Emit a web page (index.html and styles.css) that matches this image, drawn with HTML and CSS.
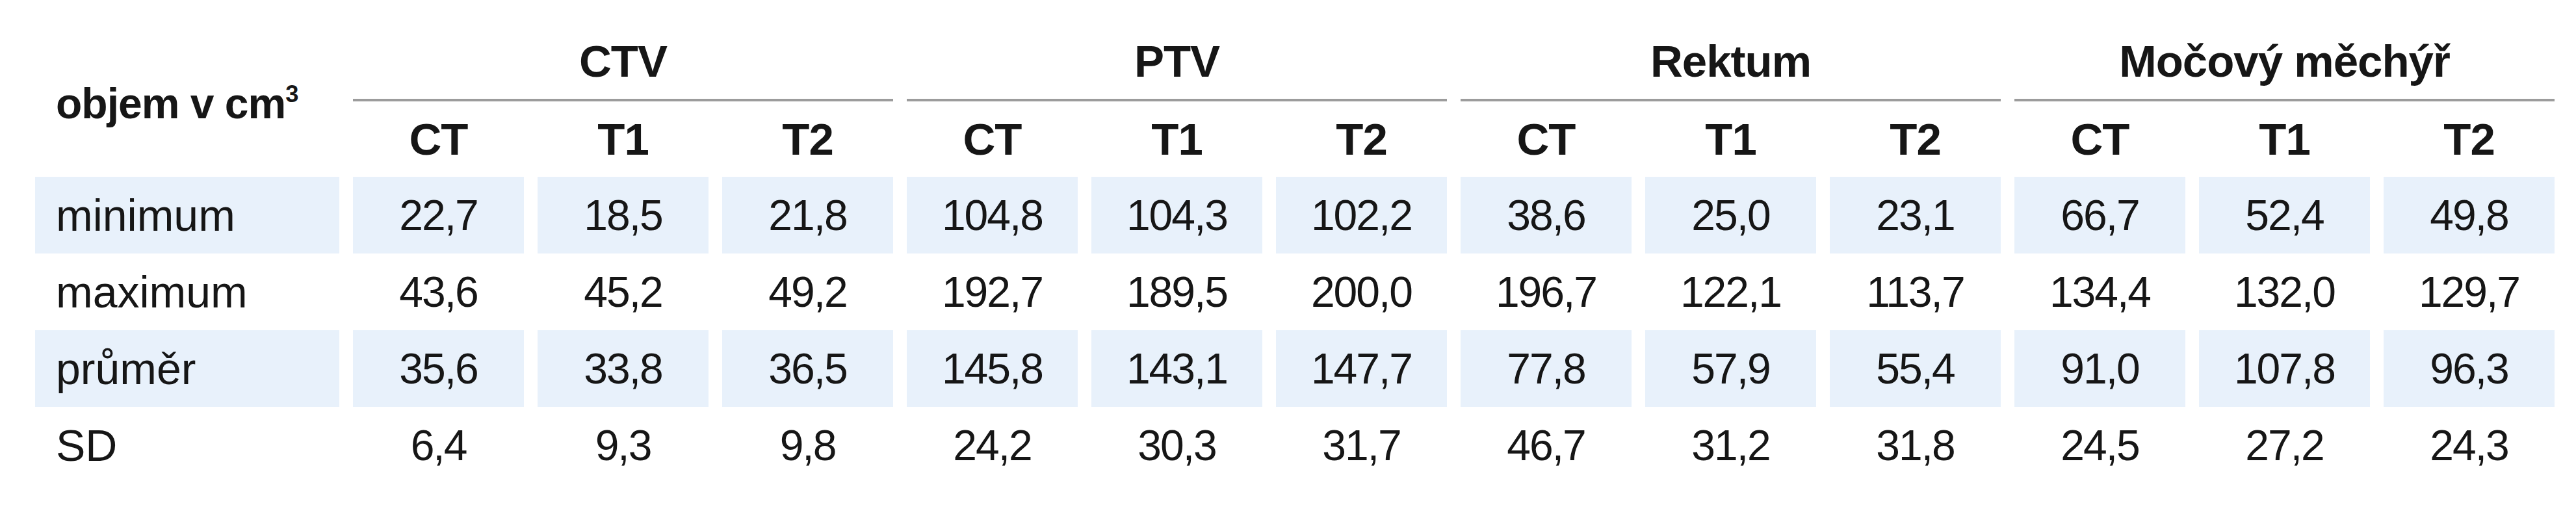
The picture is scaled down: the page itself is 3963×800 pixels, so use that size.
FILE: index.html
```html
<!DOCTYPE html>
<html lang="cs">
<head>
<meta charset="utf-8">
<title>Objem v cm3</title>
<link rel="stylesheet" href="styles.css">
</head>
<body>
<table class="vol">
  <colgroup>
    <col class="c-lab">
    <col class="c-d"><col class="c-d"><col class="c-d">
    <col class="c-d"><col class="c-d"><col class="c-d">
    <col class="c-d"><col class="c-d"><col class="c-d">
    <col class="c-d"><col class="c-d"><col class="c-d">
  </colgroup>
  <thead>
    <tr class="grp">
      <th class="corner" rowspan="2">objem v cm<sup>3</sup></th>
      <th colspan="3">CTV</th>
      <th colspan="3">PTV</th>
      <th colspan="3">Rektum</th>
      <th colspan="3">Močový měchýř</th>
    </tr>
    <tr class="sub">
      <th>CT</th><th>T1</th><th>T2</th>
      <th>CT</th><th>T1</th><th>T2</th>
      <th>CT</th><th>T1</th><th>T2</th>
      <th>CT</th><th>T1</th><th>T2</th>
    </tr>
  </thead>
  <tbody>
    <tr class="shade">
      <td class="lab">minimum</td>
      <td>22,7</td><td>18,5</td><td>21,8</td>
      <td>104,8</td><td>104,3</td><td>102,2</td>
      <td>38,6</td><td>25,0</td><td>23,1</td>
      <td>66,7</td><td>52,4</td><td>49,8</td>
    </tr>
    <tr>
      <td class="lab">maximum</td>
      <td>43,6</td><td>45,2</td><td>49,2</td>
      <td>192,7</td><td>189,5</td><td>200,0</td>
      <td>196,7</td><td>122,1</td><td>113,7</td>
      <td>134,4</td><td>132,0</td><td>129,7</td>
    </tr>
    <tr class="shade">
      <td class="lab">průměr</td>
      <td>35,6</td><td>33,8</td><td>36,5</td>
      <td>145,8</td><td>143,1</td><td>147,7</td>
      <td>77,8</td><td>57,9</td><td>55,4</td>
      <td>91,0</td><td>107,8</td><td>96,3</td>
    </tr>
    <tr>
      <td class="lab">SD</td>
      <td>6,4</td><td>9,3</td><td>9,8</td>
      <td>24,2</td><td>30,3</td><td>31,7</td>
      <td>46,7</td><td>31,2</td><td>31,8</td>
      <td>24,5</td><td>27,2</td><td>24,3</td>
    </tr>
  </tbody>
</table>
</body>
</html>
```

FILE: styles.css
```css
html, body {
  margin: 0;
  padding: 0;
  background: #ffffff;
}

body {
  font-family: "Liberation Sans", Arial, sans-serif;
  color: #161616;
}

.vol {
  margin: 36px 0 0 33px;
  border-collapse: separate;
  border-spacing: 21px 0;
  table-layout: fixed;
}

.c-lab { width: 468px; }
.c-d { width: 263px; }

.vol th,
.vol td {
  padding: 0;
  text-align: center;
  vertical-align: middle;
}

.vol th {
  font-weight: bold;
  font-size: 69px;
  letter-spacing: -1px;
}

.grp th {
  height: 116px;
  border-bottom: 4px solid #9c9c9c;
}

.grp th.corner {
  border-bottom: none;
  text-align: left;
  padding: 10px 0 0 32px;
  font-size: 66px;
  letter-spacing: -1px;
  white-space: nowrap;
}

.corner sup {
  font-size: 0.55em;
  vertical-align: 0.7em;
  line-height: 0;
}

.sub th {
  height: 116px;
}

.vol td {
  height: 118px;
  font-size: 66px;
  letter-spacing: -2px;
}

.vol td.lab {
  text-align: left;
  padding-left: 32px;
  font-size: 68px;
  letter-spacing: 0;
}

.shade td {
  background: #e8f1fb;
}
```
